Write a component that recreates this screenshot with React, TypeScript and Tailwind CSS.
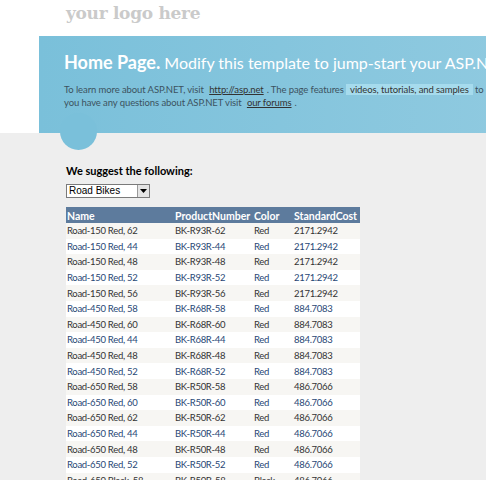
import React from 'react';

interface Product {
  name: string;
  number: string;
  color: string;
  cost: string;
}

const products: Product[] = [
  { name: 'Road-150 Red, 62', number: 'BK-R93R-62', color: 'Red', cost: '2171.2942' },
  { name: 'Road-150 Red, 44', number: 'BK-R93R-44', color: 'Red', cost: '2171.2942' },
  { name: 'Road-150 Red, 48', number: 'BK-R93R-48', color: 'Red', cost: '2171.2942' },
  { name: 'Road-150 Red, 52', number: 'BK-R93R-52', color: 'Red', cost: '2171.2942' },
  { name: 'Road-150 Red, 56', number: 'BK-R93R-56', color: 'Red', cost: '2171.2942' },
  { name: 'Road-450 Red, 58', number: 'BK-R68R-58', color: 'Red', cost: '884.7083' },
  { name: 'Road-450 Red, 60', number: 'BK-R68R-60', color: 'Red', cost: '884.7083' },
  { name: 'Road-450 Red, 44', number: 'BK-R68R-44', color: 'Red', cost: '884.7083' },
  { name: 'Road-450 Red, 48', number: 'BK-R68R-48', color: 'Red', cost: '884.7083' },
  { name: 'Road-450 Red, 52', number: 'BK-R68R-52', color: 'Red', cost: '884.7083' },
  { name: 'Road-650 Red, 58', number: 'BK-R50R-58', color: 'Red', cost: '486.7066' },
  { name: 'Road-650 Red, 60', number: 'BK-R50R-60', color: 'Red', cost: '486.7066' },
  { name: 'Road-650 Red, 62', number: 'BK-R50R-62', color: 'Red', cost: '486.7066' },
  { name: 'Road-650 Red, 44', number: 'BK-R50R-44', color: 'Red', cost: '486.7066' },
  { name: 'Road-650 Red, 48', number: 'BK-R50R-48', color: 'Red', cost: '486.7066' },
  { name: 'Road-650 Red, 52', number: 'BK-R50R-52', color: 'Red', cost: '486.7066' },
  { name: 'Road-650 Black, 58', number: 'BK-R50B-58', color: 'Black', cost: '486.7066' },
];

const App: React.FC = () => {
  return (
    <div className="h-[480px] w-[486px] overflow-hidden bg-white font-['Lato',sans-serif]">
      {/* header */}
      <header className="h-[36px] pl-[66px] pt-[1px]">
        <p className="font-['DejaVu_Serif',serif] text-[17px] font-bold leading-[24px] tracking-[-0.3px] text-[#cacaca]">
          your logo here
        </p>
      </header>

      {/* featured */}
      <section className="relative z-10 ml-[39px] h-[97px] w-[960px] bg-gradient-to-r from-[#7ac0da] to-[#a4d4e6] pl-[25px] pt-[13px]">
        <h1 className="whitespace-nowrap text-[16px] leading-[26px] text-white">
          <span className="text-[18px] font-bold">Home Page.</span> Modify this template to jump-start your ASP.NET MVC
          application.
        </h1>
        <p className="mt-[7px] whitespace-nowrap text-[9.5px] leading-[13px] tracking-[-0.1px] text-[#3c5260]">
          To learn more about ASP.NET, visit{' '}
          <a className="px-[3px] text-[#333] underline">http://asp.net</a>. The page features{' '}
          <mark className="bg-[#a6dbed] px-[4px] text-[#333]">videos, tutorials, and samples</mark> to help you get the
          most from ASP.NET. If
          <br />
          you have any questions about ASP.NET visit <a className="px-[3px] text-[#333] underline">our forums</a>.
        </p>
        <div className="absolute -bottom-[17px] left-[21px] h-[37px] w-[37px] rounded-full bg-[#7ac0da]" />
      </section>

      {/* body */}
      <main className="h-full bg-[#eeeeee] pl-[66px] pt-[30px]">
        <h3 className="text-[11px] font-bold leading-[15px] text-black">We suggest the following:</h3>
        <div className="mt-[6px] flex h-[14px] w-[84px] items-center border border-[#7a7a7a] bg-white pl-[2px]">
          <span className="flex-1 font-['Liberation_Sans',sans-serif] text-[10px] leading-none text-black">Road Bikes</span>
          <span className="flex h-[12px] w-[12px] items-center justify-center border-l border-[#999] bg-[#e4e4e4]">
            <svg width="7" height="4" viewBox="0 0 7 4">
              <path d="M0 0h7L3.5 4z" fill="#000" />
            </svg>
          </span>
        </div>
        <table className="mt-[9px] w-[294px] border-collapse">
          <thead>
            <tr className="h-[16px] bg-[#5d7b9d] text-left text-[10.5px] font-bold leading-[12px] text-white">
              <th className="w-[108px] px-[1px] pt-[2px]">Name</th>
              <th className="w-[79px] px-[1px] pt-[2px]">ProductNumber</th>
              <th className="w-[40px] px-[1px] pt-[2px]">Color</th>
              <th className="px-[1px] pt-[2px]">StandardCost</th>
            </tr>
          </thead>
          <tbody className="text-[9.5px] leading-[12px] tracking-[-0.3px]">
            {products.map((p, i) => (
              <tr
                key={p.number}
                className={i % 2 === 0 ? 'h-[15.6px] bg-[#f7f6f3] text-[#333333]' : 'h-[15.6px] bg-white text-[#284775]'}
              >
                <td className="px-[1px] pt-[1px]">{p.name}</td>
                <td className="px-[1px] pt-[1px]">{p.number}</td>
                <td className="px-[1px] pt-[1px]">{p.color}</td>
                <td className="px-[1px] pt-[1px]">{p.cost}</td>
              </tr>
            ))}
          </tbody>
        </table>
      </main>
    </div>
  );
};

export default App;
